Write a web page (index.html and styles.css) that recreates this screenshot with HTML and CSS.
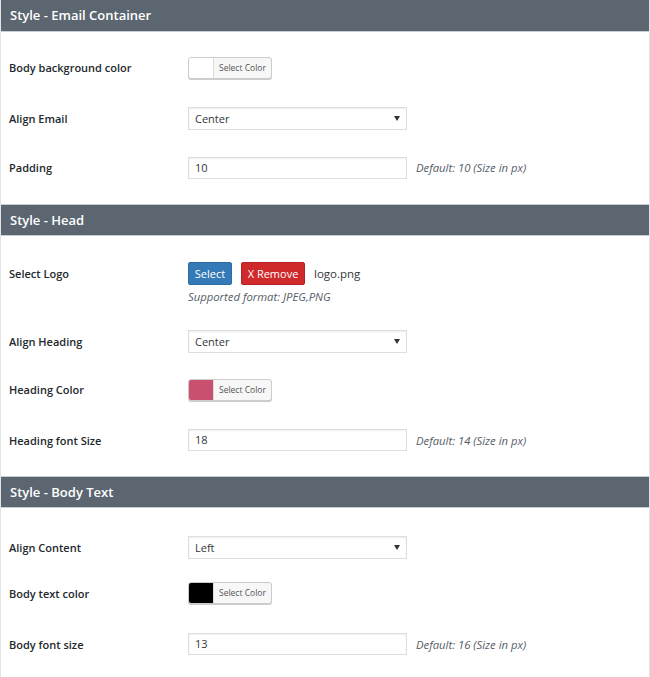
FILE: index.html
```html
<!DOCTYPE html>
<html>
<head>
<meta charset="utf-8">
<link rel="stylesheet" href="styles.css">
</head>
<body>
<div class="panel">
  <section class="section s1">
    <h2 class="section-title">Style - Email Container</h2>
    <div class="section-body">
      <div class="row r-a">
        <div class="label">Body background color</div>
        <div class="field">
          <button class="color-btn"><span class="swatch sw-white"></span><span class="color-text">Select Color</span></button>
        </div>
      </div>
      <div class="row r-b">
        <div class="label">Align Email</div>
        <div class="field">
          <div class="select"><span>Center</span><span class="caret"></span></div>
        </div>
      </div>
      <div class="row r-c">
        <div class="label">Padding</div>
        <div class="field">
          <div class="input">10</div>
          <span class="hint">Default: 10 (Size in px)</span>
        </div>
      </div>
    </div>
  </section>

  <section class="section s2">
    <h2 class="section-title">Style - Head</h2>
    <div class="section-body">
      <div class="row r-logo">
        <div class="label">Select Logo</div>
        <div class="field field-col">
          <div class="logo-line">
            <button class="btn btn-blue">Select</button>
            <button class="btn btn-red">X Remove</button>
            <span class="filename">logo.png</span>
          </div>
          <div class="hint small">Supported format: JPEG,PNG</div>
        </div>
      </div>
      <div class="row r-d">
        <div class="label">Align Heading</div>
        <div class="field">
          <div class="select"><span>Center</span><span class="caret"></span></div>
        </div>
      </div>
      <div class="row r-e">
        <div class="label">Heading Color</div>
        <div class="field">
          <button class="color-btn"><span class="swatch sw-pink"></span><span class="color-text">Select Color</span></button>
        </div>
      </div>
      <div class="row r-f">
        <div class="label">Heading font Size</div>
        <div class="field">
          <div class="input">18</div>
          <span class="hint">Default: 14 (Size in px)</span>
        </div>
      </div>
    </div>
  </section>

  <section class="section s3">
    <h2 class="section-title">Style - Body Text</h2>
    <div class="section-body">
      <div class="row r-g">
        <div class="label">Align Content</div>
        <div class="field">
          <div class="select"><span>Left</span><span class="caret"></span></div>
        </div>
      </div>
      <div class="row r-h">
        <div class="label">Body text color</div>
        <div class="field">
          <button class="color-btn"><span class="swatch sw-black"></span><span class="color-text">Select Color</span></button>
        </div>
      </div>
      <div class="row r-i">
        <div class="label">Body font size</div>
        <div class="field">
          <div class="input">13</div>
          <span class="hint">Default: 16 (Size in px)</span>
        </div>
      </div>
    </div>
  </section>
</div>
</body>
</html>
```

FILE: styles.css
```css
* { box-sizing: border-box; }
html, body { margin: 0; padding: 0; background: #ffffff; }
body {
  font-family: "Open Sans", "Noto Sans", sans-serif;
  color: #23282d;
  width: 650px;
}
.panel {
  border-left: 1px solid #e2e4e6;
  border-right: 1px solid #e2e4e6;
  background: #fff;
}
.section-title {
  margin: 0;
  height: 32px;
  background: #5c6670;
  color: #fff;
  font-size: 13px;
  font-weight: 600;
  line-height: 31px;
  padding: 0 9px;
  border: 1px solid #c9cdd1;
  border-left: 0;
  border-right: 0;
}
.s1 .section-title { border-top: 0; }
.section-body { padding-top: 10px; }
.s1 .section-body { height: 172px; }
.s2 .section-body { height: 240px; }
.row {
  display: flex;
  align-items: center;
}
.r-a { height: 51px; }
.r-b { height: 51px; }
.r-c { height: 47px; }
.r-logo { height: 71px; align-items: flex-start; padding-top: 16px; }
.r-logo .label { line-height: 23px; }
.r-d { height: 49px; }
.r-e { height: 47px; }
.r-f { height: 54px; }
.r-g { height: 58px; }
.r-h { height: 34px; }
.r-i { height: 68px; }
.label {
  width: 187px;
  padding-left: 8px;
  font-size: 11px;
  font-weight: 600;
  color: #23282d;
}
.field {
  display: flex;
  align-items: center;
}
.field-col {
  flex-direction: column;
  align-items: flex-start;
}
.color-btn {
  display: flex;
  align-items: stretch;
  height: 22px;
  padding: 0;
  border: 1px solid #cccccc;
  border-radius: 3px;
  background: #f7f7f7;
  box-shadow: 0 1px 0 #cccccc;
  overflow: hidden;
  font-family: inherit;
}
.swatch { width: 25px; border-right: 1px solid #dddddd; }
.sw-white { background: #ffffff; }
.sw-pink { background: #c9516f; }
.sw-black { background: #000000; }
.color-text {
  padding: 0 5px 0 5px;
  font-size: 8.5px;
  line-height: 20px;
  color: #555;
}
.select {
  width: 219px;
  height: 23px;
  border: 1px solid #dddddd;
  box-shadow: inset 0 1px 2px rgba(0,0,0,0.07);
  display: flex;
  align-items: center;
  justify-content: space-between;
  padding: 0 5px 0 6px;
  font-size: 11px;
  color: #32373c;
  background: #fff;
}
.caret {
  width: 0; height: 0;
  border-left: 3px solid transparent;
  border-right: 3px solid transparent;
  border-top: 5px solid #333;
  margin-right: 1px;
}
.input {
  width: 219px;
  height: 22px;
  border: 1px solid #dddddd;
  box-shadow: inset 0 1px 2px rgba(0,0,0,0.07);
  padding: 0 6px;
  font-size: 11px;
  line-height: 20px;
  color: #32373c;
  background: #fff;
}
.hint {
  margin-left: 9px;
  font-size: 11.3px;
  font-style: italic;
  color: #555d66;
}
.hint.small { margin-left: 0; margin-top: 4px; }
.logo-line { display: flex; align-items: center; }
.btn {
  height: 23px;
  border: 0;
  border-radius: 2px;
  color: #fff;
  font-family: inherit;
  font-size: 11px;
  padding: 0;
  text-align: center;
}
.btn-blue { background: #337ab7; width: 44px; border: 1px solid #2e6da4; }
.btn-red { background: #d0292b; width: 64px; margin-left: 9px; border: 1px solid #b52325; }
.filename { margin-left: 9px; font-size: 11.5px; color: #32373c; }
```
